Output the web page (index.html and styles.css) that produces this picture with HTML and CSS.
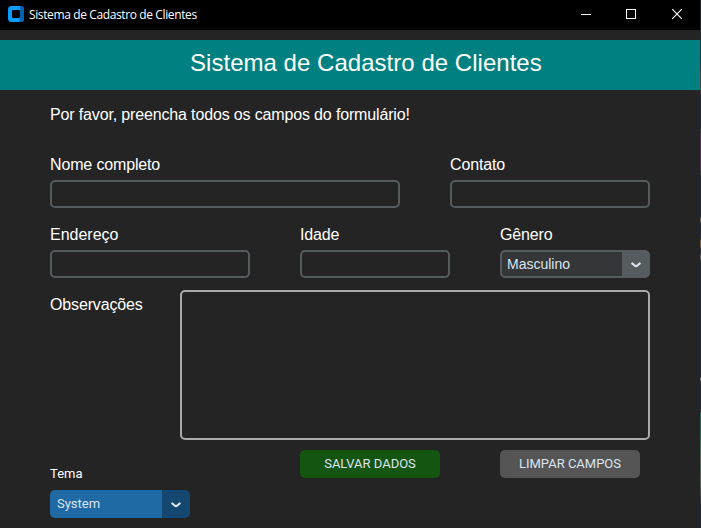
FILE: index.html
```html
<!DOCTYPE html>
<html lang="pt-BR">
<head>
<meta charset="utf-8">
<title>Sistema de Cadastro de Clientes</title>
<link rel="stylesheet" href="styles.css">
</head>
<body>
<div class="desktop">
<div class="window">
  <div class="titlebar">
    <svg class="app-icon" width="16" height="16" viewBox="0 0 16 16">
      <rect width="16" height="16" rx="3.5" fill="#0a9cff"/>
      <path d="M12 0h.5A3.5 3.5 0 0 1 16 3.5v9a3.5 3.5 0 0 1-3.5 3.5H11l1-4z" fill="#0063b1"/>
      <rect x="4" y="4" width="8" height="8" rx="1.2" fill="#000"/>
    </svg>
    <span class="app-name">Sistema de Cadastro de Clientes</span>
    <div class="controls">
      <svg width="46" height="30" viewBox="0 0 46 30" shape-rendering="crispEdges"><path d="M18 14.5h10" stroke="#fff"/></svg>
      <svg width="46" height="30" viewBox="0 0 46 30" shape-rendering="crispEdges"><path d="M17.5 9.500h9v9h-9z" stroke="#fff" fill="none"/></svg>
      <svg width="46" height="30" viewBox="0 0 46 30"><path d="M17.200 9.200l9.600 9.600M26.800 9.200l-9.600 9.600" stroke="#fff" stroke-width="1.100"/></svg>
    </div>
  </div>
  <h1 class="banner">Sistema de Cadastro de Clientes</h1>
  <form class="form">
    <p class="intro">Por favor, preencha todos os campos do formulário!</p>
    <div class="row row-first">
      <div class="field wide"><label for="nome">Nome completo</label><input id="nome" type="text"></div>
      <div class="field medium"><label for="contato">Contato</label><input id="contato" type="text"></div>
    </div>
    <div class="row">
      <div class="field medium"><label class="normal" for="endereco">Endereço</label><input id="endereco" type="text"></div>
      <div class="field small"><label for="idade">Idade</label><input id="idade" type="text"></div>
      <div class="field small"><label for="genero">Gênero</label>
        <button type="button" class="combo" id="genero"><span>Masculino</span><svg class="arrow" width="10" height="6" viewBox="0 0 10 6"><path d="M1.300 1.500L3.700 3.500Q5 4.600 6.300 3.500L8.700 1.500" fill="none" stroke="#dce4ee" stroke-width="2.200" stroke-linecap="round"/></svg></button>
      </div>
    </div>
    <div class="notes"><label for="obs">Observações</label><textarea id="obs"></textarea></div>
    <div class="footer">
      <div class="theme">
        <label for="tema">Tema</label>
        <button type="button" class="theme-menu" id="tema"><span>System</span><svg class="arrow" width="10" height="6" viewBox="0 0 10 6"><path d="M1.300 1.500L3.700 3.500Q5 4.600 6.300 3.500L8.700 1.500" fill="none" stroke="#dce4ee" stroke-width="2.200" stroke-linecap="round"/></svg></button>
      </div>
      <div class="actions">
        <button type="button" class="action save">SALVAR DADOS</button>
        <button type="button" class="action clear">LIMPAR CAMPOS</button>
      </div>
    </div>
  </form>
</div>
<div class="edge"></div>
</div>
</body>
</html>
```
FILE: styles.css
```css
* { box-sizing: border-box; }

body {
  margin: 0;
  overflow: hidden;
  background: #242424;
  color: #fff;
  font-family: "Liberation Sans", Arial, sans-serif;
}

.desktop { display: grid; grid-template-columns: 700px 1px; height: 528px; }
.window { background: #242424; overflow: hidden; }

.edge {
  background: linear-gradient(
    #20252a 0 30px, #292d31 30px 60px, #504638 75px 90px, #26313a 94px 132px,
    #49305a 133px 171px, #26313a 172px 217px, #625f5b 218px 222px, #26313a 223px 239px,
    #706044 240px 247px, #26313a 248px 254px, #5a5c5c 255px 259px, #26313a 260px 377px,
    #777 378px 380px, #26313a 381px 412px, #216c58 413px 430px, #50705d 455px,
    #5c5f54 485px, #26313a 505px);
}

.titlebar {
  display: flex;
  align-items: center;
  height: 30px;
  padding-left: 8px;
  background: #000;
}
.app-icon { margin-top: -2px; }
.app-name {
  margin-left: 5px;
  font: 12px/18px "Open Sans", "Noto Sans", sans-serif;
  letter-spacing: -0.38px;
  white-space: nowrap;
}
.controls { display: flex; margin-left: auto; margin-right: -1px; }
.controls svg { display: block; }

.banner {
  display: flex;
  align-items: center;
  height: 50px;
  margin: 10px 0 0;
  padding: 0 0 4px 190px;
  background: #008080;
  font-size: 24px;
  font-weight: 400;
  letter-spacing: 0.03px;
  white-space: nowrap;
}

.form { padding: 11px 50px 0; }
.intro {
  margin: 0;
  font-size: 16px;
  line-height: 28px;
  letter-spacing: -0.15px;
  white-space: nowrap;
}

.row { display: flex; justify-content: space-between; margin-top: 13px; }
.row-first { margin-top: 22px; }
.field { display: flex; flex-direction: column; gap: 1px; }
.field label, .notes label {
  font-size: 16px;
  line-height: 28px;
  letter-spacing: -0.15px;
  white-space: nowrap;
}
.field label.normal { letter-spacing: 0; }
.wide { width: 350px; }
.medium { width: 200px; }
.small { width: 150px; }

input, textarea {
  display: block;
  width: 100%;
  margin: 0;
  border: 2px solid #565b5e;
  border-radius: 5px;
  background: transparent;
  color: #dce4ee;
  outline: 0;
}
input { height: 28px; padding: 0 6px; }

.combo, .theme-menu {
  display: flex;
  align-items: center;
  justify-content: space-between;
  height: 28px;
  padding: 0 7px 0 5px;
  border: 2px solid #565b5e;
  border-radius: 5px;
  color: #dce4ee;
}
.combo {
  width: 150px;
  background: linear-gradient(90deg, #343638 120px, #565b5e 120px);
  font: 14px "Liberation Sans", Arial, sans-serif;
}
.arrow { display: block; margin-top: 1px; }

.notes { display: grid; grid-template-columns: 130px 470px; margin-top: 12px; }
.notes label { padding-top: 1px; }
textarea { height: 150px; border-color: #aaa; resize: none; }

.footer { display: flex; justify-content: space-between; margin-top: 10px; }
.theme {
  display: flex;
  flex-direction: column;
  gap: 2px;
  font: 13px Roboto, sans-serif;
}
.theme label { margin-top: 10px; line-height: 28px; }
.theme-menu {
  width: 140px;
  padding: 0 9px 0 7px;
  border-width: 0;
  background: linear-gradient(90deg, #1f6aa5 112px, #144870 112px);
  font: 13px Roboto, sans-serif;
}
.theme-menu span { padding-bottom: 2px; }
.actions { display: flex; gap: 60px; margin-right: 10px; }
.action {
  width: 140px;
  height: 28px;
  padding: 0 0 2px 0;
  border: 0;
  border-radius: 5px;
  color: #dce4ee;
  font: 13px Roboto, sans-serif;
}
.save { background: #145512; }
.clear { background: #555; }
```
